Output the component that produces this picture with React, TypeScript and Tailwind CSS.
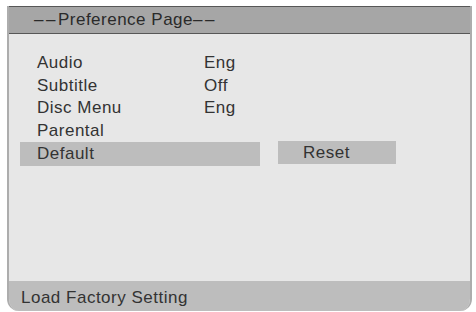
import React from 'react'

const rows = [
    { label: 'Audio', value: 'Eng' },
    { label: 'Subtitle', value: 'Off' },
    { label: 'Disc Menu', value: 'Eng' },
    { label: 'Parental', value: '' },
]

const App = () => {
    return (
        <div className="w-[476px] h-[312px] bg-white pt-[6px] pl-[7px] font-['Liberation_Sans',Arial,sans-serif] text-[17px] tracking-[0.5px] text-[#333333]">
            <div className="w-[465px] h-[305px] flex flex-col overflow-hidden rounded-b-[12px] border-x-2 border-[#adadad] bg-[#e7e7e7]">
                {/* title bar */}
                <div className="h-[28px] shrink-0 bg-[#a6a6a6] border-y border-r-2 border-[#575757] -mr-[2px] pl-[25px] leading-[26px] text-[#2a2a2a]">
                    <span className="tracking-[2.5px]">––</span>Preference Page<span className="tracking-[2.5px]">––</span>
                </div>

                {/* options */}
                <div className="flex-1 pt-[18px] pl-[11px]">
                    {rows.map((r) => (
                        <div key={r.label} className="h-[22.5px] w-[240px] pl-[17px] flex leading-[22.5px]">
                            <span className="w-[167px]">{r.label}</span>
                            <span>{r.value}</span>
                        </div>
                    ))}
                    <div className="flex items-start gap-[18px]">
                        <div className="h-[24px] w-[240px] pl-[17px] bg-[#bdbdbd] leading-[24px]">Default</div>
                        <div className="-mt-px h-[23px] w-[118px] pl-[25px] bg-[#bdbdbd] leading-[23px]">Reset</div>
                    </div>
                </div>

                {/* status bar */}
                <div className="h-[30px] shrink-0 bg-[#bdbdbd] pl-[12px] pt-[7px] leading-[20px]">
                    Load Factory Setting
                </div>
            </div>
        </div>
    )
}

export default App
